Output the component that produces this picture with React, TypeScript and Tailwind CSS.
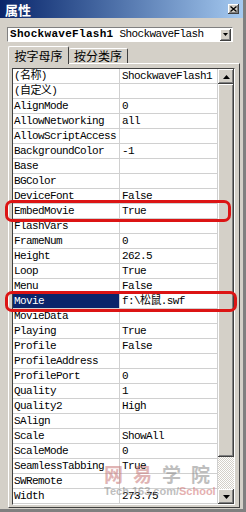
const rows: [string, string][] = [
  ["(名称)", "ShockwaveFlash1"],
  ["(自定义)", ""],
  ["AlignMode", "0"],
  ["AllowNetworking", "all"],
  ["AllowScriptAccess", ""],
  ["BackgroundColor", "-1"],
  ["Base", ""],
  ["BGColor", ""],
  ["DeviceFont", "False"],
  ["EmbedMovie", "True"],
  ["FlashVars", ""],
  ["FrameNum", "0"],
  ["Height", "262.5"],
  ["Loop", "True"],
  ["Menu", "False"],
  ["Movie", "f:\\松鼠.swf"],
  ["MovieData", ""],
  ["Playing", "True"],
  ["Profile", "False"],
  ["ProfileAddress", ""],
  ["ProfilePort", "0"],
  ["Quality", "1"],
  ["Quality2", "High"],
  ["SAlign", ""],
  ["Scale", "ShowAll"],
  ["ScaleMode", "0"],
  ["SeamlessTabbing", "True"],
  ["SWRemote", ""],
  ["Width", "273.75"],
];

const mono = "font-['Liberation_Mono','Noto_Sans_CJK_SC',monospace] text-[11px] tracking-[-0.6px]";
const raised =
  "shadow-[inset_-1px_-1px_#404040,inset_1px_1px_#ffffff,inset_-2px_-2px_#808080,inset_2px_2px_#d4d0c8]";

function Arrow({ up }: { up?: boolean }) {
  return (
    <div className={`h-[15px] w-[16px] bg-[#d4d0c8] ${raised} flex items-center justify-center`}>
      <svg width="7" height="4" viewBox="0 0 7 4">
        {up ? <path d="M3.5 0 L7 4 L0 4 Z" fill="#000" /> : <path d="M0 0 L7 0 L3.5 4 Z" fill="#000" />}
      </svg>
    </div>
  );
}

export default function App() {
  return (
    <div className="relative w-[246px] h-[512px] bg-[#d4d0c8] flex flex-col overflow-hidden border-r-[3px] border-r-[#808080] border-b-[3px] border-b-[#808080]">
      {/* title bar */}
      <div className="h-[18px] shrink-0 bg-gradient-to-r from-[#0a246a] to-[#a6caf0] flex items-center justify-between pl-[5px] pr-[4px]">
        <span className="text-white font-bold text-[13px] leading-none font-['Noto_Sans_CJK_SC',sans-serif]">属性</span>
        <div className={`w-[11px] h-[10px] bg-[#d4d0c8] ${raised} flex items-center justify-center`}>
          <svg width="7" height="6" viewBox="0 0 7 6">
            <path d="M0.5 0.5 L6.5 5.5 M6.5 0.5 L0.5 5.5" stroke="#000" strokeWidth="1.3" />
          </svg>
        </div>
      </div>

      {/* object dropdown */}
      <div className="mt-[9px] ml-[7px] w-[226px] h-[15px] bg-white border-t border-l border-[#808080] border-b border-r border-b-white border-r-white flex items-center justify-between">
        <div className={`${mono} leading-none text-black pl-[2px] whitespace-nowrap`}>
          <span className="font-bold tracking-[0.3px]">ShockwaveFlash1</span>
          <span className="ml-[6px]">ShockwaveFlash</span>
        </div>
        <div className={`h-[12px] w-[11px] mr-[1px] bg-[#d4d0c8] ${raised} flex items-center justify-center`}>
          <svg width="5" height="3" viewBox="0 0 5 3">
            <path d="M0 0 L5 0 L2.5 3 Z" fill="#000" />
          </svg>
        </div>
      </div>

      {/* tabs */}
      <div className="mt-[4px] ml-[8px] h-[18px] flex items-end relative z-10">
        <div className="h-[18px] w-[61px] bg-[#d4d0c8] border-t border-l border-white border-r border-r-[#404040] rounded-t-[2px] flex items-center justify-center text-[12px] text-black font-['Noto_Sans_CJK_SC',sans-serif] leading-none">
          按字母序
        </div>
        <div className="h-[15px] w-[59px] mb-[1px] bg-[#d4d0c8] border-t border-white border-r border-r-[#404040] rounded-t-[2px] flex items-center justify-center text-[12px] text-black font-['Noto_Sans_CJK_SC',sans-serif] leading-none">
          按分类序
        </div>
      </div>

      {/* tab panel */}
      <div className="-mt-[1px] ml-[8px] w-[232px] h-[445px] border-t border-l border-white border-r border-b border-r-[#404040] border-b-[#404040] pt-[4px] pl-[3px]">
        <div className="w-[223px] h-[437px] border-t border-l border-[#404040] border-r border-b border-r-white border-b-white flex">
          <div className="w-[205px] bg-white">
            {rows.map(([name, value]) => {
              const sel = name === "Movie";
              return (
                <div key={name} className="h-[15px] flex border-b border-[#d0d0d0]">
                  <div
                    className={`w-[107px] border-r border-[#d0d0d0] pl-[1px] ${mono} leading-[14px] whitespace-nowrap overflow-hidden ${
                      sel ? "bg-[#0a246a] text-white" : "text-black"
                    }`}
                  >
                    {name}
                  </div>
                  <div className={`w-[98px] border-r border-[#d0d0d0] pl-[2px] ${mono} leading-[14px] text-black whitespace-nowrap overflow-hidden`}>
                    {value}
                  </div>
                </div>
              );
            })}
          </div>
          {/* scrollbar */}
          <div className="w-[16px] flex flex-col">
            <Arrow up />
            <div className={`h-[373px] bg-[#d4d0c8] ${raised}`} />
            <div className="flex-1 bg-[repeating-conic-gradient(#d4d0c8_0_25%,#ffffff_0_50%)] bg-[length:2px_2px]" />
            <Arrow />
          </div>
        </div>
      </div>

      {/* red highlight marks */}
      <div className="absolute left-[5px] top-[200px] w-[226px] h-[22px] border-[3px] border-[#dc1414] rounded-[7px] pointer-events-none" />
      <div className="absolute left-[5px] top-[291px] w-[232px] h-[21px] border-[3px] border-[#dc1414] rounded-[7px] pointer-events-none" />

      {/* watermark */}
      <div className="absolute left-[104px] top-[462px] pointer-events-none opacity-55 flex flex-col items-start">
        <div className="text-[19px] font-bold leading-[24px] tracking-[10px] font-['Noto_Sans_CJK_SC',sans-serif] whitespace-nowrap">
          <span className="text-[#c87878]">网易</span>
          <span className="text-[#8a8a8a]">学院</span>
        </div>
        <div className="text-[11px] font-bold leading-[11px] font-['Liberation_Sans',sans-serif] whitespace-nowrap">
          <span className="text-[#8a8a8a]">Tech.163.com/</span>
          <span className="text-[#d07070]">School</span>
        </div>
      </div>
    </div>
  );
}
